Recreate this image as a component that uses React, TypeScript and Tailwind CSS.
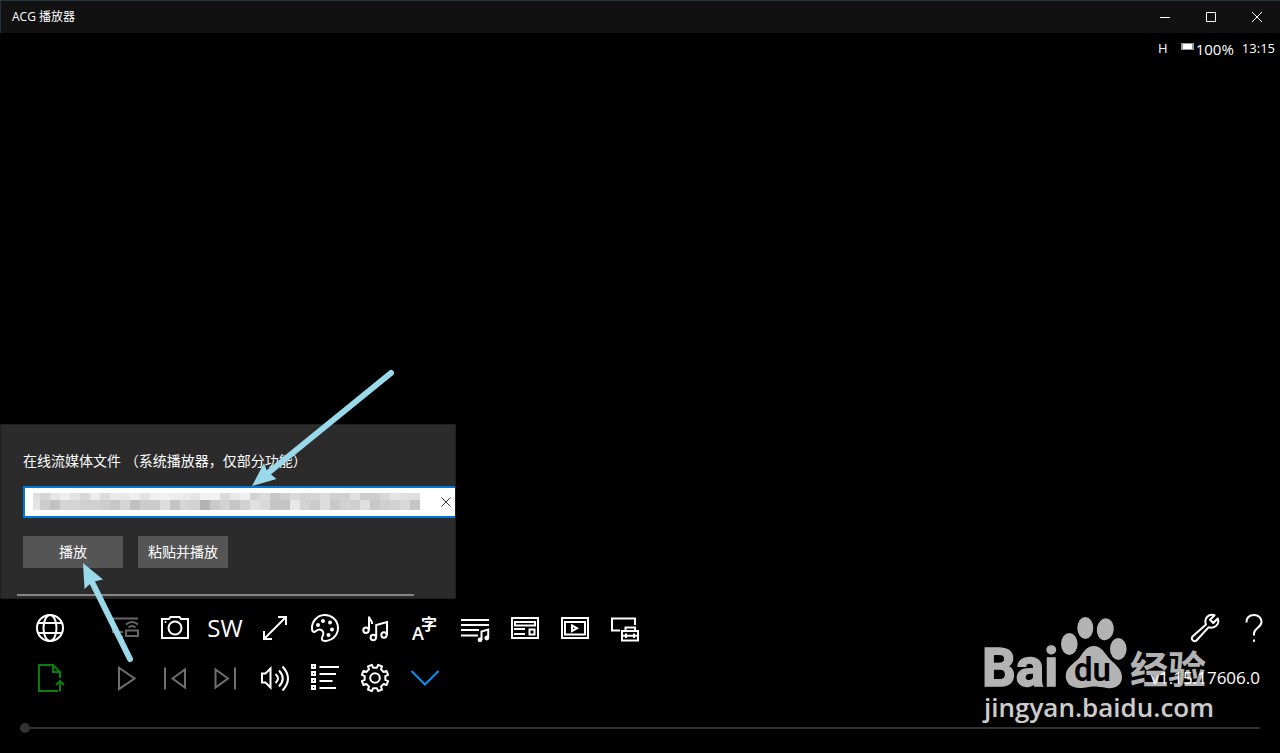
import { useState } from 'react';
import type { ReactNode } from 'react';
import clsx from 'clsx';

// 8-tooth gear outline around (15, 15)
const gearPoints = Array.from({ length: 8 }, (_, i) => {
  const center = 22.5 + i * 45;
  return [
    [center - 12, 10.5],
    [center - 9, 13.5],
    [center + 9, 13.5],
    [center + 12, 10.5],
  ]
    .map(([deg, r]) => {
      const a = (deg * Math.PI) / 180;
      return `${15 + r * Math.cos(a)},${15 + r * Math.sin(a)}`;
    })
    .join(' ');
}).join(' ');

// Censored address: two rows of gray blocks
const mosaic = [
  'de d5 e6 ef e2 d8 ec db ea e8 ee e2 f0 f2 ed eb e5 f2 f2 db e8 f0 d3 dc c7 d0 da d2 d5 dc d0 d0 e0 cd cd d8 e4 e0 df',
  'e4 cc c2 d5 d5 d0 d0 cc c6 d5 c0 cb cb dd c4 d6 d2 b3 c9 d2 c5 d2 e0 d9 c4 c4 e8 d2 cb dd c9 d2 cf df c8 cf d2 d8 c5',
].map((row) => row.split(' '));

interface Tool {
  label: string;
  icon: ReactNode;
  className?: string;
}

const topTools: Tool[] = [
  {
    label: 'Open URL',
    className: 'mr-[25px]',
    icon: (
      <>
        <circle cx="15" cy="15" r="13" />
        <ellipse cx="15" cy="15" rx="6.5" ry="13" />
        <path d="M3 10h24M3 20h24" />
      </>
    ),
  },
  {
    label: 'Cast',
    className: 'text-[#666]',
    icon: (
      <>
        <path d="M28 5.500H3V19h10M8 23.500h5" />
        <rect x="16" y="17.500" width="12" height="5.500" />
        <path d="M16 11.500Q22 6.500 28 11.500M18.500 14.500Q22 11.500 25.500 14.500" />
      </>
    ),
  },
  {
    label: 'Screenshot',
    icon: (
      <>
        <path d="M2 6H9L10.500 4H19.500L21 6H28V25H2Z" />
        <circle cx="15" cy="15" r="6.500" />
        <circle cx="5.500" cy="9" r="1" fill="currentColor" stroke="none" />
      </>
    ),
  },
  { label: 'SW', icon: null },
  {
    label: 'Fullscreen',
    icon: <path d="M3.500 26.500L26.500 3.500M18 4H26V12M4 18V26H12" />,
  },
  {
    label: 'Color',
    icon: (
      <>
        <path d="M2 15.500A13 13 0 1 1 16 27.900C11.500 28.200 11 26 12.500 23.500C14.500 20.500 13 16.500 9.500 16.500C6.500 16.500 5.500 19.500 3.800 19C2.300 18.500 2 17.500 2 15.500Z" />
        <g fill="currentColor" stroke="none">
          <circle cx="8" cy="12" r="2" />
          <circle cx="13" cy="8" r="2" />
          <circle cx="20" cy="9.500" r="2" />
          <circle cx="22" cy="16.500" r="2" />
          <circle cx="18.500" cy="22" r="2" />
        </g>
      </>
    ),
  },
  {
    label: 'Audio',
    icon: (
      <>
        <circle cx="6" cy="17.300" r="2.700" />
        <path d="M9 17.300V3.500C9 6.500 12.500 7 12 11" />
        <circle cx="13.300" cy="24.500" r="2.700" />
        <circle cx="24" cy="22" r="2.700" />
        <path d="M16.200 24.500V12L27 9V22" />
      </>
    ),
  },
  {
    label: 'Subtitle font',
    icon: (
      <g fill="currentColor" stroke="none" fontWeight="600">
        <text x="2" y="27" fontSize="18">A</text>
        <text x="11" y="17" fontSize="16">字</text>
      </g>
    ),
  },
  {
    label: 'Playlist',
    icon: (
      <>
        <path d="M1 7H29M1 12H29M1 17H19M1 22.500H18M21.500 27V18.500L28.200 16.500V25" />
        <g fill="currentColor" stroke="none">
          <circle cx="20" cy="26.800" r="2.400" />
          <circle cx="26.800" cy="25" r="2.400" />
        </g>
      </>
    ),
  },
  {
    label: 'Media info',
    icon: (
      <>
        <rect x="2" y="5" width="26" height="20" />
        <rect x="5" y="9" width="20" height="3.500" />
        <rect x="19.500" y="16.500" width="5" height="5" />
        <path d="M4 16H15M4 21H15" />
      </>
    ),
  },
  {
    label: 'Video',
    icon: (
      <>
        <rect x="2" y="5" width="26" height="20" />
        <rect x="5" y="9" width="20" height="12.500" />
        <path d="M12 12.500L17 15.200L12 18Z" />
      </>
    ),
  },
  {
    label: 'Display tools',
    icon: (
      <>
        <path d="M10 17.500H2V5.500H25V12M15.500 17.500V14.500H25V17.500M12 22.800H28M16 20.500V25M24 20.500V25" />
        <rect x="12" y="18" width="16" height="9.500" />
      </>
    ),
  },
];

const bottomTools: Tool[] = [
  {
    label: 'Open file',
    className: 'text-[#0a800a] mr-[25px]',
    icon: <path d="M23 28H4V2H18L25 9V15M18 2V9H25M25 28.500V18M21 22L25 18L29 22" />,
  },
  { label: 'Play', className: 'text-[#707070]', icon: <path d="M9 4.800L24.500 15.500L9 26Z" /> },
  {
    label: 'Previous',
    className: 'text-[#707070]',
    icon: <path d="M5 4.500V26.500M12.500 15.500L25 6.500V24.500Z" />,
  },
  {
    label: 'Next',
    className: 'text-[#707070]',
    icon: <path d="M25 4.500V26.500M18 15.500L5.500 6.500V24.500Z" />,
  },
  {
    label: 'Volume',
    icon: (
      <path d="M2 10.500H5.500L10.500 5.500V24.500L5.500 19.500H2ZM15.500 11Q20.500 15.500 15.500 20M19 7.500Q26.500 15.500 19 23.500M22.500 3.500Q33.500 15.500 22.500 27.500" />
    ),
  },
  {
    label: 'List',
    icon: (
      <>
        <path d="M9.500 4H29M9.500 11H26M9.500 18H22.500M9.500 25H26" />
        <path d="M2 2H5V5H2ZM2 9H5V12H2ZM2 16H5V19H2ZM2 23H5V26H2Z" />
      </>
    ),
  },
  {
    label: 'Settings',
    icon: (
      <>
        <polygon points={gearPoints} strokeLinejoin="round" />
        <circle cx="15" cy="15" r="4.800" />
      </>
    ),
  },
  { label: 'Collapse', className: 'text-[#0a93f5]', icon: <path d="M1.500 8L15 21.500L28.500 8" /> },
];

function ToolButton({ label, icon, className }: Tool) {
  return (
    <button
      type="button"
      aria-label={label}
      className={clsx('flex h-[50px] w-[50px] shrink-0 items-center justify-center', className)}
    >
      {icon ? (
        <svg width="30" height="30" viewBox="0 0 30 30" fill="none" stroke="currentColor" strokeWidth="2" aria-hidden="true">
          {icon}
        </svg>
      ) : (
        <span className="text-2xl">{label}</span>
      )}
    </button>
  );
}

function TitleBar() {
  return (
    <header className="flex h-[33px] items-center justify-between border-t border-l border-[#22343e] bg-[#111]">
      <h1 className="pl-[11px] text-xs">ACG 播放器</h1>
      <div className="flex">
        {[
          { label: 'Minimize', d: 'M0 5.500H10' },
          { label: 'Maximize', d: 'M.5 .5H9.500V9.500H.5Z' },
          { label: 'Close', d: 'M0 0L10 10M10 0L0 10' },
        ].map((item) => (
          <button
            key={item.label}
            type="button"
            aria-label={item.label}
            className="flex h-8 w-[46px] items-center justify-center"
          >
            <svg width="10" height="10" viewBox="0 0 10 10" fill="none" stroke="currentColor" aria-hidden="true">
              <path d={item.d} />
            </svg>
          </button>
        ))}
      </div>
    </header>
  );
}

function StatusBar() {
  return (
    <div className="flex h-8 items-center justify-end pr-[5px] text-[13px]">
      <span className="mr-[13px]">H</span>
      <svg width="14" height="8" viewBox="0 0 14 8" className="mr-px mb-1" aria-hidden="true">
        <rect width="13" height="7" fill="#999" />
        <rect x="2" y="1" width="9" height="5" fill="#fff" />
      </svg>
      <span className="mr-2 text-[15px]">100%</span>
      <time>13:15</time>
    </div>
  );
}

function StreamPanel() {
  const [url, setUrl] = useState('');

  return (
    <section className="mb-1 w-[456px] max-w-full border border-[#1e1e1e] bg-[#2b2b2b] pt-[26px] pb-0.5">
      <div className="pl-[22px] text-sm">
        <label htmlFor="stream-url" className="block h-5 leading-5">
          在线流媒体文件 （系统播放器，仅部分功能）
        </label>
        <div className="relative mt-[15px] flex h-8 border-2 border-r-0 border-[#0078d7] bg-white">
          <input
            id="stream-url"
            type="text"
            value={url}
            onChange={(e) => setUrl(e.target.value)}
            className="min-w-0 flex-1 px-2 text-black outline-none"
          />
          <svg width="387" height="17" className="pointer-events-none absolute top-[5px] left-2" shapeRendering="crispEdges" aria-hidden="true">
            {mosaic.map((row, y) =>
              row.map((shade, x) => (
                <rect
                  key={`${x}-${y}`}
                  x={x === 0 ? 0 : x * 10 - 3}
                  y={y * 7}
                  width={x === 0 ? 7 : 10}
                  height={y === 0 ? 7 : 10}
                  fill={`#${shade}${shade}${shade}`}
                />
              ))
            )}
          </svg>
          <button
            type="button"
            aria-label="Clear"
            onClick={() => setUrl('')}
            className="flex w-[18px] items-center justify-center text-[#333]"
          >
            <svg width="10" height="10" viewBox="0 0 10 10" stroke="currentColor" aria-hidden="true">
              <path d="M.5 .5L9.500 9.500M9.500 .5L.5 9.500" />
            </svg>
          </button>
        </div>
        <div className="mt-[18px] flex gap-[15px]">
          <button type="button" className="h-8 w-[100px] bg-[#555]">播放</button>
          <button type="button" className="h-8 bg-[#555] px-2.5">粘贴并播放</button>
        </div>
      </div>
      <div className="mt-[26px] mr-[41px] ml-4 h-0.5 bg-[#868686]" />
    </section>
  );
}

function Annotations() {
  return (
    <svg
      width="456"
      height="400"
      viewBox="0 353 456 400"
      className="pointer-events-none absolute bottom-0 left-0"
      fill="#9ad9ea"
      stroke="#9ad9ea"
      aria-hidden="true"
    >
      <path d="M391 373L268 473" strokeWidth="6" strokeLinecap="round" />
      <path d="M252 486L264 463L267 471L276.500 479Z" stroke="none" />
      <path d="M130 659L92 582" strokeWidth="6" strokeLinecap="round" />
      <path d="M83 563L103 579.500L92 582L84.500 589Z" stroke="none" />
    </svg>
  );
}

function Watermark() {
  return (
    <svg
      width="240"
      height="120"
      viewBox="0 0 240 120"
      className="pointer-events-none absolute right-[60px] bottom-[23px]"
      fill="#fff"
    >
      <g opacity="0.7">
        <text x="2" y="76" fontSize="53" fontWeight="700" fontFamily="Roboto, sans-serif" stroke="#fff" strokeWidth="1.500">
          Bai
        </text>
        <ellipse cx="89.300" cy="34" rx="8.300" ry="11" />
        <ellipse cx="105.300" cy="18" rx="8" ry="11" />
        <ellipse cx="125.300" cy="19.300" rx="8.500" ry="11" transform="rotate(8 125.300 19.300)" />
        <ellipse cx="138.300" cy="39" rx="8.300" ry="11" />
        <path d="M113.700 36C121 36 124 42 128 47C133 53 142 58 142 67C142 76 134 79 127 78C121 77 118 76.500 113.700 76.500C109 76.500 106 78 100 78C91 78 85.700 73 85.700 66C85.700 57 95 53 100 47C104 41 107 36 113.700 36Z" />
        <text x="94" y="71" fontSize="33" fontWeight="600" fontFamily="Roboto, sans-serif" fill="#000">du</text>
        <text x="150" y="73" fontSize="38" fontWeight="700" fontFamily="'Noto Sans CJK SC', sans-serif">经验</text>
      </g>
      <text x="4" y="107" fontSize="26" fontWeight="600" opacity="0.8">jingyan.baidu.com</text>
    </svg>
  );
}

export default function App() {
  const [position, setPosition] = useState(0);

  return (
    <div className="relative flex min-h-screen flex-col overflow-hidden bg-black font-['Open_Sans','Noto_Sans_CJK_SC',sans-serif] text-white">
      <TitleBar />
      <StatusBar />
      <main className="flex flex-1 flex-col justify-end">
        <StreamPanel />
      </main>
      <footer>
        <div className="flex pl-[25px]">
          {topTools.map((tool) => (
            <ToolButton key={tool.label} {...tool} />
          ))}
          <div className="ml-auto flex">
            <ToolButton
              label="Tools"
              icon={
                <path
                  d="M24.500 2.300C19 .5 13.500 5 16 11.500L2.800 23.300C1.500 24.500 1.500 26 2.700 27.300C4 28.500 5.500 28.500 6.700 27.200L18.500 14.300C25 16 30 11 27.700 5.500L23.300 10L20 6.800Z"
                  strokeLinejoin="round"
                />
              }
            />
            <ToolButton
              label="Help"
              icon={
                <path d="M6.500 9.500C6.500 4.500 9.500 2 14 2S21.500 5 21.500 9C21.500 14.500 14 15 14 20.500V22.500M14 26.500V28.700" />
              }
            />
          </div>
        </div>
        <div className="flex items-center pl-[25px]">
          {bottomTools.map((tool) => (
            <ToolButton key={tool.label} {...tool} />
          ))}
          <span className="ml-auto pr-5 text-[17px]">v1.15.17606.0</span>
        </div>
        <div className="flex h-[50px] items-center px-5">
          <input
            type="range"
            aria-label="Position"
            min={0}
            max={100}
            value={position}
            onChange={(e) => setPosition(Number(e.target.value))}
            className="h-2.5 w-full appearance-none bg-transparent [&::-webkit-slider-runnable-track]:h-0.5 [&::-webkit-slider-runnable-track]:bg-[#333] [&::-webkit-slider-thumb]:-mt-1 [&::-webkit-slider-thumb]:h-2.5 [&::-webkit-slider-thumb]:w-2.5 [&::-webkit-slider-thumb]:appearance-none [&::-webkit-slider-thumb]:rounded-full [&::-webkit-slider-thumb]:bg-[#333]"
          />
        </div>
      </footer>
      <Watermark />
      <Annotations />
    </div>
  );
}
